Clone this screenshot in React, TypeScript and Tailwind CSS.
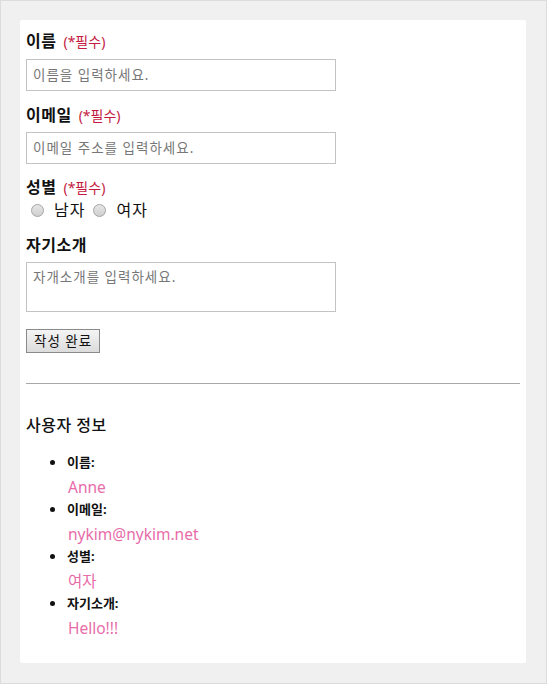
import React from 'react';

const font = 'font-["Noto_Sans","Noto_Sans_CJK_KR",sans-serif]';

const Required = () => (
  <span className="ml-[7px] text-[14px] font-normal tracking-normal text-[#c41a41]">(*필수)</span>
);

const Radio: React.FC<{ label: string }> = ({ label }) => (
  <label className="flex items-center">
    <span className="mx-[5px] block h-[13px] w-[13px] rounded-full border border-[#a3a3a3] bg-gradient-to-b from-[#e6e6e6] to-[#cfcfcf]" />
    <span className="ml-[5px] mr-[3px] text-[16px] tracking-[1px] text-[#111]">{label}</span>
  </label>
);

const info = [
  { label: '이름:', value: 'Anne' },
  { label: '이메일:', value: 'nykim@nykim.net' },
  { label: '성별:', value: '여자' },
  { label: '자기소개:', value: 'Hello!!!' },
];

const labelCls = 'h-[22px] text-[16px] font-bold leading-[22px] tracking-[0.5px] text-[#111]';
const inputCls =
  'flex h-[32px] w-[310px] items-center border border-[#c3c3c3] px-[6px] text-[13.5px] tracking-[1px] text-[#777]';

export default function App() {
  return (
    <div className={`h-[684px] w-[547px] border border-[#dcdcdc] bg-[#f0f0f0] p-[19px] ${font}`}>
      <div className="h-[643px] w-[506px] rounded-[2px] bg-white px-[6px] pt-[10px]">
        {/* 폼 */}
        <div className={labelCls}>
          이름<Required />
        </div>
        <div className={`mt-[7px] ${inputCls}`}>이름을 입력하세요.</div>

        <div className={`mt-[13px] ${labelCls}`}>
          이메일<Required />
        </div>
        <div className={`mt-[6px] ${inputCls}`}>이메일 주소를 입력하세요.</div>

        <div className={`mt-[12px] ${labelCls}`}>
          성별<Required />
        </div>
        <div className="flex h-[24px] items-center">
          <Radio label="남자" />
          <Radio label="여자" />
        </div>

        <div className={`mt-[12px] ${labelCls}`}>자기소개</div>
        <div className="mt-[6px] h-[50px] w-[310px] border border-[#c3c3c3] px-[6px] pt-[5px] text-[13.5px] leading-[18px] tracking-[1px] text-[#777]">
          자개소개를 입력하세요.
        </div>

        <button className="mt-[17px] flex h-[24px] items-center border border-[#8a8a8a] bg-gradient-to-b from-[#f4f4f4] to-[#dcdcdc] px-[7px] text-[13.5px] tracking-[1px] text-[#111]">
          작성 완료
        </button>

        <hr className="mt-[30px] border-t border-[#a8a8a8]" />

        {/* 사용자 정보 */}
        <div className="mt-[30px] h-[22px] text-[16px] font-medium leading-[22px] tracking-[0.5px] text-[#111]">사용자 정보</div>
        <ul className="mt-[15px] list-disc pl-[41px] marker:text-[#111]">
          {info.map((item) => (
            <li key={item.label} className="text-[15px] leading-[20px]">
              <div className="h-[20px] text-[13px] font-bold leading-[20px] text-[#111]">{item.label}</div>
              <div className="h-[26px] pl-[1px] pt-[2px] text-[15.5px] leading-[26px] text-[#e76ca9]">{item.value}</div>
            </li>
          ))}
        </ul>
      </div>
    </div>
  );
}
